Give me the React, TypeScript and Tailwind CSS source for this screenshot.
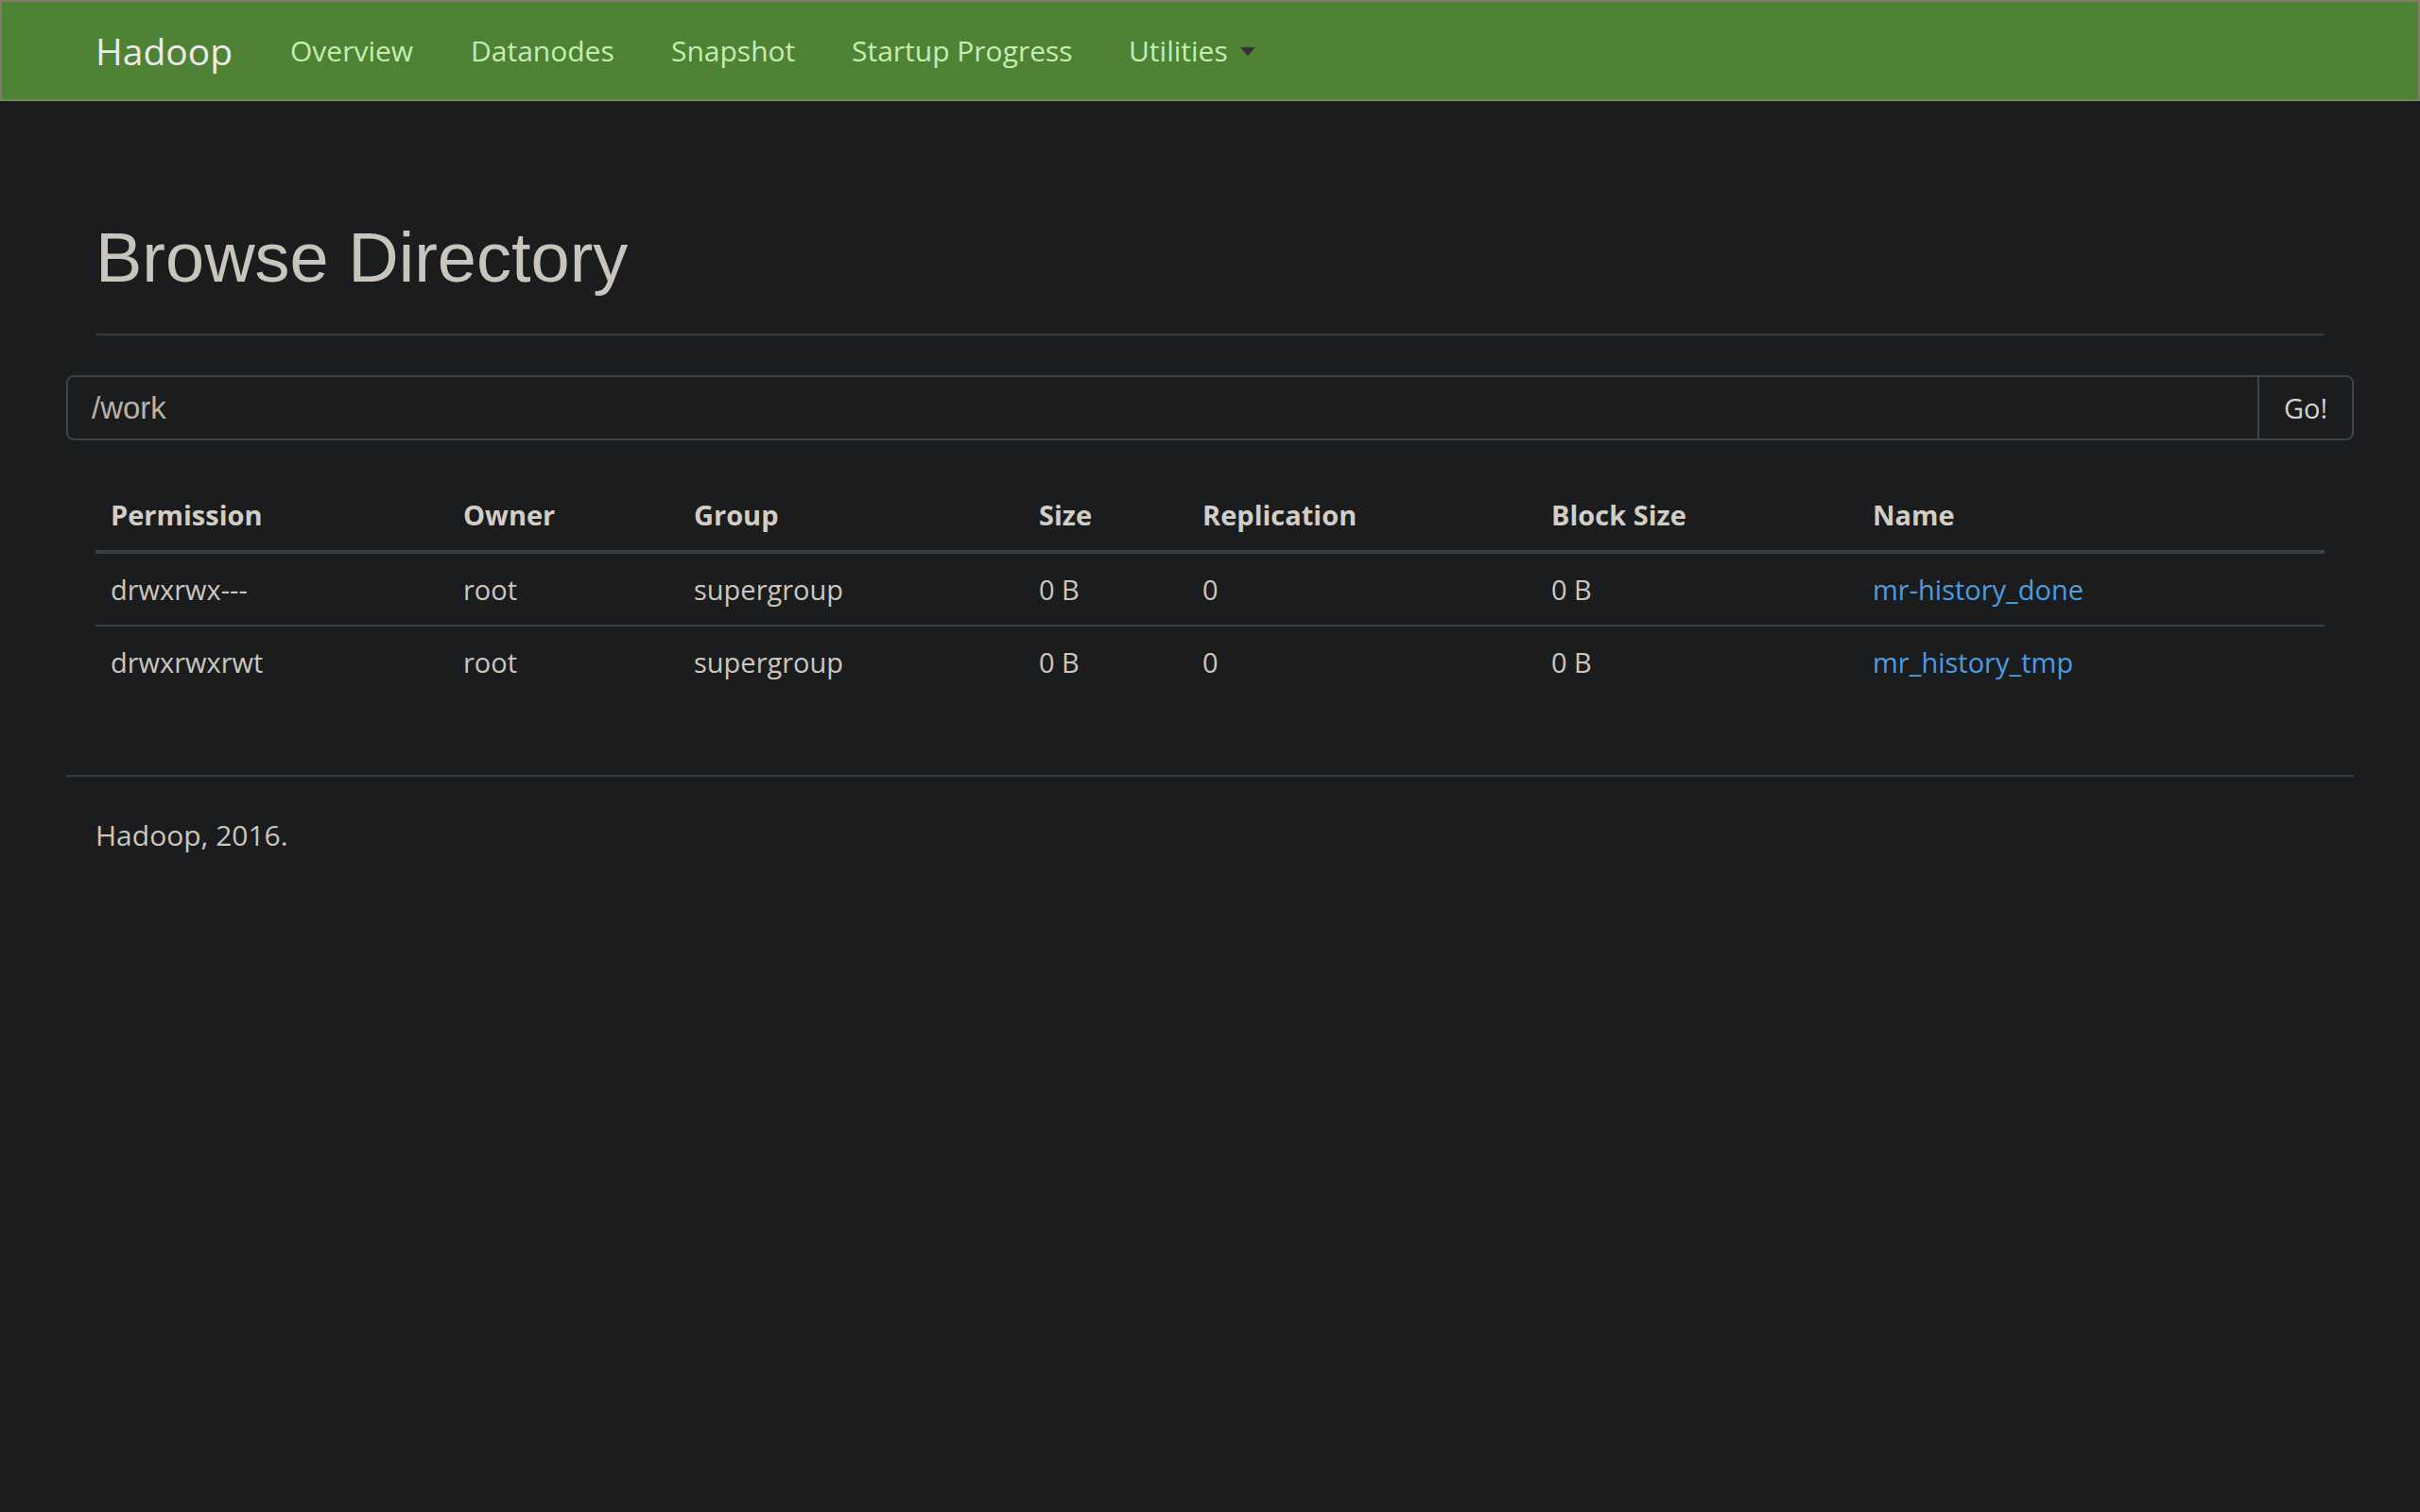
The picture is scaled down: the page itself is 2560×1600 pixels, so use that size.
import React from "react";

const navLinks = [
  { label: "Overview", width: "w-[191px]" },
  { label: "Datanodes", width: "w-[212px]" },
  { label: "Snapshot", width: "w-[191px]" },
  { label: "Startup Progress", width: "w-[293px]" },
];

const rows = [
  {
    permission: "drwxrwx---",
    owner: "root",
    group: "supergroup",
    size: "0 B",
    replication: "0",
    blockSize: "0 B",
    name: "mr-history_done",
  },
  {
    permission: "drwxrwxrwt",
    owner: "root",
    group: "supergroup",
    size: "0 B",
    replication: "0",
    blockSize: "0 B",
    name: "mr_history_tmp",
  },
];

function Navbar() {
  return (
    <nav className="h-[107px] border-2 border-[#857c6d] bg-[#4e8234]">
      <div className="mx-auto flex h-full w-[2420px] items-center">
        <a href="#" className="w-[237px] pl-[31px] text-[39px] leading-[52px] text-[#ebebeb]">
          Hadoop
        </a>
        {navLinks.map((link) => (
          <a
            key={link.label}
            href="#"
            className={`${link.width} text-[30px] leading-[41px] text-[#c6edb3]`}
          >
            {link.label}
          </a>
        ))}
        <a href="#" className="flex items-center text-[30px] leading-[41px] text-[#c6edb3]">
          Utilities
          <span className="ml-[13px] mt-[2px] inline-block h-0 w-0 border-x-[8px] border-t-[9px] border-x-transparent border-t-[#333333]" />
        </a>
      </div>
    </nav>
  );
}

export default function App() {
  return (
    <div className="min-h-screen bg-[#1b1c1e] font-['Open_Sans',sans-serif]">
      <Navbar />

      <div className="mx-auto w-[2420px]">
        <div className="px-[31px] pt-[125px]">
          <div className="border-b-2 border-[#393c3f] pb-[40px]">
            <h1 className="font-['Liberation_Sans',Arial,sans-serif] text-[74px] leading-[81px] text-[#c9c4bc]">
              Browse Directory
            </h1>
          </div>
        </div>

        <div className="mt-[42px] flex h-[69px]">
          <input
            defaultValue="/work"
            className="h-full flex-1 rounded-l-[8px] border-2 border-[#3d4245] bg-transparent pl-[25px] font-['Liberation_Sans',Arial,sans-serif] text-[33px] text-[#b8b2a9] outline-none"
          />
          <button className="h-full w-[100px] rounded-r-[8px] border-2 border-l-0 border-[#3d4245] text-[29px] text-[#d6d1c9]">
            Go!
          </button>
        </div>

        <div className="mt-[42px] px-[31px]">
          <table className="w-full table-fixed border-collapse text-left text-[29px]">
            <colgroup>
              <col className="w-[373px]" />
              <col className="w-[244px]" />
              <col className="w-[365px]" />
              <col className="w-[173px]" />
              <col className="w-[369px]" />
              <col className="w-[340px]" />
              <col className="w-[494px]" />
            </colgroup>
            <thead>
              <tr className="border-b-4 border-[#3c3f42]">
                {["Permission", "Owner", "Group", "Size", "Replication", "Block Size", "Name"].map((h) => (
                  <th key={h} className="px-[16px] py-[16px] font-bold leading-[42px] text-[#d2cdc5]">
                    {h}
                  </th>
                ))}
              </tr>
            </thead>
            <tbody>
              {rows.map((row, i) => (
                <tr key={row.name} className={i > 0 ? "border-t-2 border-[#3c3f42]" : ""}>
                  <td className="px-[16px] py-[17px] leading-[41px] text-[#cbc6be]">{row.permission}</td>
                  <td className="px-[16px] py-[17px] leading-[41px] text-[#cbc6be]">{row.owner}</td>
                  <td className="px-[16px] py-[17px] leading-[41px] text-[#cbc6be]">{row.group}</td>
                  <td className="px-[16px] py-[17px] leading-[41px] text-[#cbc6be]">{row.size}</td>
                  <td className="px-[16px] py-[17px] leading-[41px] text-[#cbc6be]">{row.replication}</td>
                  <td className="px-[16px] py-[17px] leading-[41px] text-[#cbc6be]">{row.blockSize}</td>
                  <td className="px-[16px] py-[17px] leading-[41px]">
                    <a href="#" className="text-[#4c9ce0]">
                      {row.name}
                    </a>
                  </td>
                </tr>
              ))}
            </tbody>
          </table>
        </div>

        <hr className="mt-[82px] border-t-2 border-[#393c3f]" />

        <p className="mt-[41px] px-[31px] text-[30px] leading-[41px] text-[#cbc6be]">Hadoop, 2016.</p>
      </div>
    </div>
  );
}
